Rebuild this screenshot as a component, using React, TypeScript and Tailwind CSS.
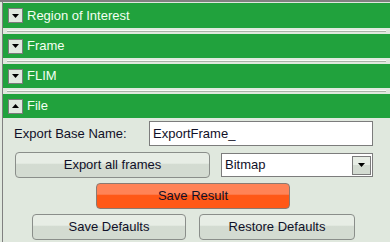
const font = { fontFamily: '"Liberation Sans", Arial, sans-serif' };

const Triangle = ({ up }: { up?: boolean }) => (
  <svg width="7" height="4" viewBox="0 0 7 4" className="block">
    {up ? <path d="M0 4 L3.5 0 L7 4 Z" fill="#000" /> : <path d="M0 0 L7 0 L3.5 4 Z" fill="#000" />}
  </svg>
);

const Header = ({ title, open, first }: { title: string; open?: boolean; first?: boolean }) => (
  <div className={`${first ? "h-[25px]" : "h-[24px]"} bg-[#21a23d] flex items-center pl-[5px]`}>
    <div className="w-[15px] h-[15px] border border-[#7c7c7c] bg-[#e1e9df] flex items-center justify-center">
      <Triangle up={open} />
    </div>
    <span className="ml-[4px] text-[13px] text-[#f4fff2]">{title}</span>
  </div>
);

const Separator = () => (
  <div className="h-[6px] pt-[2px] pl-[4px] pr-[4px]">
    <div className="h-[1px] bg-[#f6faf5]" />
    <div className="h-[1px] bg-[#a9b3a8]" />
  </div>
);

const btn =
  "h-[26px] rounded-[4px] border border-[#8a8e8a] text-[13px] text-[#101028] flex items-center justify-center bg-[linear-gradient(to_bottom,#e7ede5_0%,#e7ede5_42%,#d3dbd1_48%,#d3dbd1_100%)]";

export default function App() {
  return (
    <div className="w-[390px] h-[242px] bg-[#e0e8de] border-t-2 border-[#808080] overflow-hidden" style={font}>
      <div className="ml-[2px] h-full border-l border-[#808080] pt-[1px]">
        <Header title="Region of Interest" first />
        <Separator />
        <Header title="Frame" />
        <Separator />
        <Header title="FLIM" />
        <Separator />
        <Header title="File" open />

        <div className="flex items-center mt-[3px] h-[25px]">
          <span className="ml-[11px] text-[13px] text-[#101028]">Export Base Name:</span>
          <div className="ml-auto mr-[17px] w-[224px] h-[25px] border border-[#7c7c7c] bg-white flex items-center pl-[3px] text-[13px] text-[#101028]">
            ExportFrame_
          </div>
        </div>

        <div className="flex items-center mt-[6px] h-[26px]">
          <div className={`${btn} ml-[12px] w-[195px]`}>Export all frames</div>
          <div className="ml-[11px] w-[152px] h-[24px] border border-[#7c7c7c] bg-white flex items-center pl-[3px] text-[13px] text-[#101028]">
            <span>Bitmap</span>
            <div className="ml-auto mr-[1px] w-[19px] h-[19px] border border-[#7c7c7c] bg-[linear-gradient(to_bottom,#e7ede5_0%,#e7ede5_45%,#d3dbd1_50%,#d3dbd1_100%)] flex items-center justify-center">
              <Triangle />
            </div>
          </div>
        </div>

        <div className="flex mt-[5px]">
          <div className="ml-[93px] w-[194px] h-[26px] rounded-[4px] border border-[#8a7a72] text-[13px] text-[#101028] flex items-center justify-center bg-[linear-gradient(to_bottom,#ff8357_0%,#ff8357_42%,#ff5817_48%,#ff5817_100%)]">
            Save Result
          </div>
        </div>

        <div className="flex mt-[5px]">
          <div className={`${btn} ml-[29px] w-[154px]`}>Save Defaults</div>
          <div className={`${btn} ml-[13px] w-[156px]`}>Restore Defaults</div>
        </div>
      </div>
    </div>
  );
}
